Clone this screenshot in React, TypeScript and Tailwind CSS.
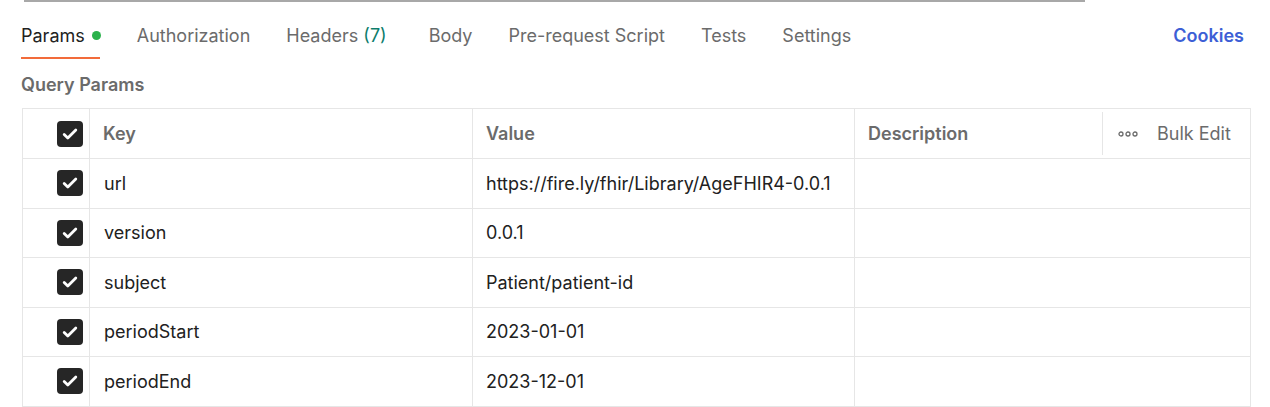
import React from "react";

const rows = [
  { k: "url", v: "https://fire.ly/fhir/Library/AgeFHIR4-0.0.1" },
  { k: "version", v: "0.0.1" },
  { k: "subject", v: "Patient/patient-id" },
  { k: "periodStart", v: "2023-01-01" },
  { k: "periodEnd", v: "2023-12-01" },
];

function Check() {
  return (
    <div className="w-[26px] h-[26px] rounded-[4px] bg-[#262626] flex items-center justify-center">
      <svg width="18" height="18" viewBox="0 0 18 18" fill="none">
        <path d="M3.2 9.4l3.6 3.5L14.8 5" stroke="#fff" strokeWidth="2.8" strokeLinecap="round" strokeLinejoin="round" />
      </svg>
    </div>
  );
}

export default function App() {
  return (
    <div className="w-[1270px] h-[407px] bg-white overflow-hidden relative" style={{ fontFamily: "Inter, 'Noto Sans', sans-serif" }}>
      <div className="absolute left-[24px] top-0 w-[1061px] h-[2px] bg-[#a8a8a8]" />
      <div className="flex items-start pl-[21px] pr-[26px] pt-[22px] h-[60px]">
        <div className="flex flex-col">
          <div className="flex items-center gap-[7px] h-[26px]">
            <span className="text-[18px] text-[#212121]">Params</span>
            <span className="w-[9px] h-[9px] rounded-full bg-[#2bb24c]" />
          </div>
          <div className="h-[2px] bg-[#f26b3a] mt-[9px] w-[79px]" />
        </div>
        <div className="flex items-center h-[26px] gap-[36px] ml-[36px] text-[18px] text-[#6b6b6b]">
          <span>Authorization</span>
          <span className="mr-[6px]">Headers <span className="text-[#0d7d6c]">(7)</span></span>
          <span>Body</span>
          <span>Pre-request Script</span>
          <span>Tests</span>
          <span>Settings</span>
        </div>
        <div className="ml-auto h-[26px] flex items-center text-[18px] font-semibold text-[#3d5fd6]">Cookies</div>
      </div>
      <div className="pl-[21px] h-[48px] flex items-start pt-[11px] text-[18px] font-semibold text-[#6b6b6b]">Query Params</div>
      <div className="ml-[22px] w-[1229px] border border-[#e6e6e6] border-b-0">
        <div className="flex h-[50px] border-b border-[#e6e6e6]">
          <div className="w-[67px] flex items-center justify-end pr-[6px] border-r border-[#e6e6e6]"><Check /></div>
          <div className="w-[383px] flex items-center pl-[13px] border-r border-[#e6e6e6] font-semibold text-[18px] text-[#6b6b6b]">Key</div>
          <div className="w-[382px] flex items-center pl-[13px] border-r border-[#e6e6e6] font-semibold text-[18px] text-[#6b6b6b]">Value</div>
          <div className="w-[247px] flex items-center pl-[13px] font-semibold text-[18px] text-[#6b6b6b]">Description</div>
          <div className="flex-1 flex items-center py-[3px]">
            <div className="h-full w-full border-l border-[#e6e6e6] flex items-center pl-[15px] text-[18px] text-[#6b6b6b]">
              <svg width="20" height="6" viewBox="0 0 20 6" className="mr-[19px]">
                <circle cx="3" cy="3" r="2" fill="none" stroke="#6b6b6b" strokeWidth="1.3" />
                <circle cx="10" cy="3" r="2" fill="none" stroke="#6b6b6b" strokeWidth="1.3" />
                <circle cx="17" cy="3" r="2" fill="none" stroke="#6b6b6b" strokeWidth="1.3" />
              </svg>
              Bulk Edit
            </div>
          </div>
        </div>
        {rows.map((r) => (
          <div key={r.k} className="flex h-[49.5px] border-b border-[#e6e6e6] text-[18px] text-[#212121]">
            <div className="w-[67px] flex items-center justify-end pr-[6px] border-r border-[#e6e6e6]"><Check /></div>
            <div className="w-[383px] flex items-center pl-[14px] border-r border-[#e6e6e6]">{r.k}</div>
            <div className="w-[382px] flex items-center pl-[13px] border-r border-[#e6e6e6]">{r.v}</div>
            <div className="flex-1" />
          </div>
        ))}
      </div>
    </div>
  );
}
